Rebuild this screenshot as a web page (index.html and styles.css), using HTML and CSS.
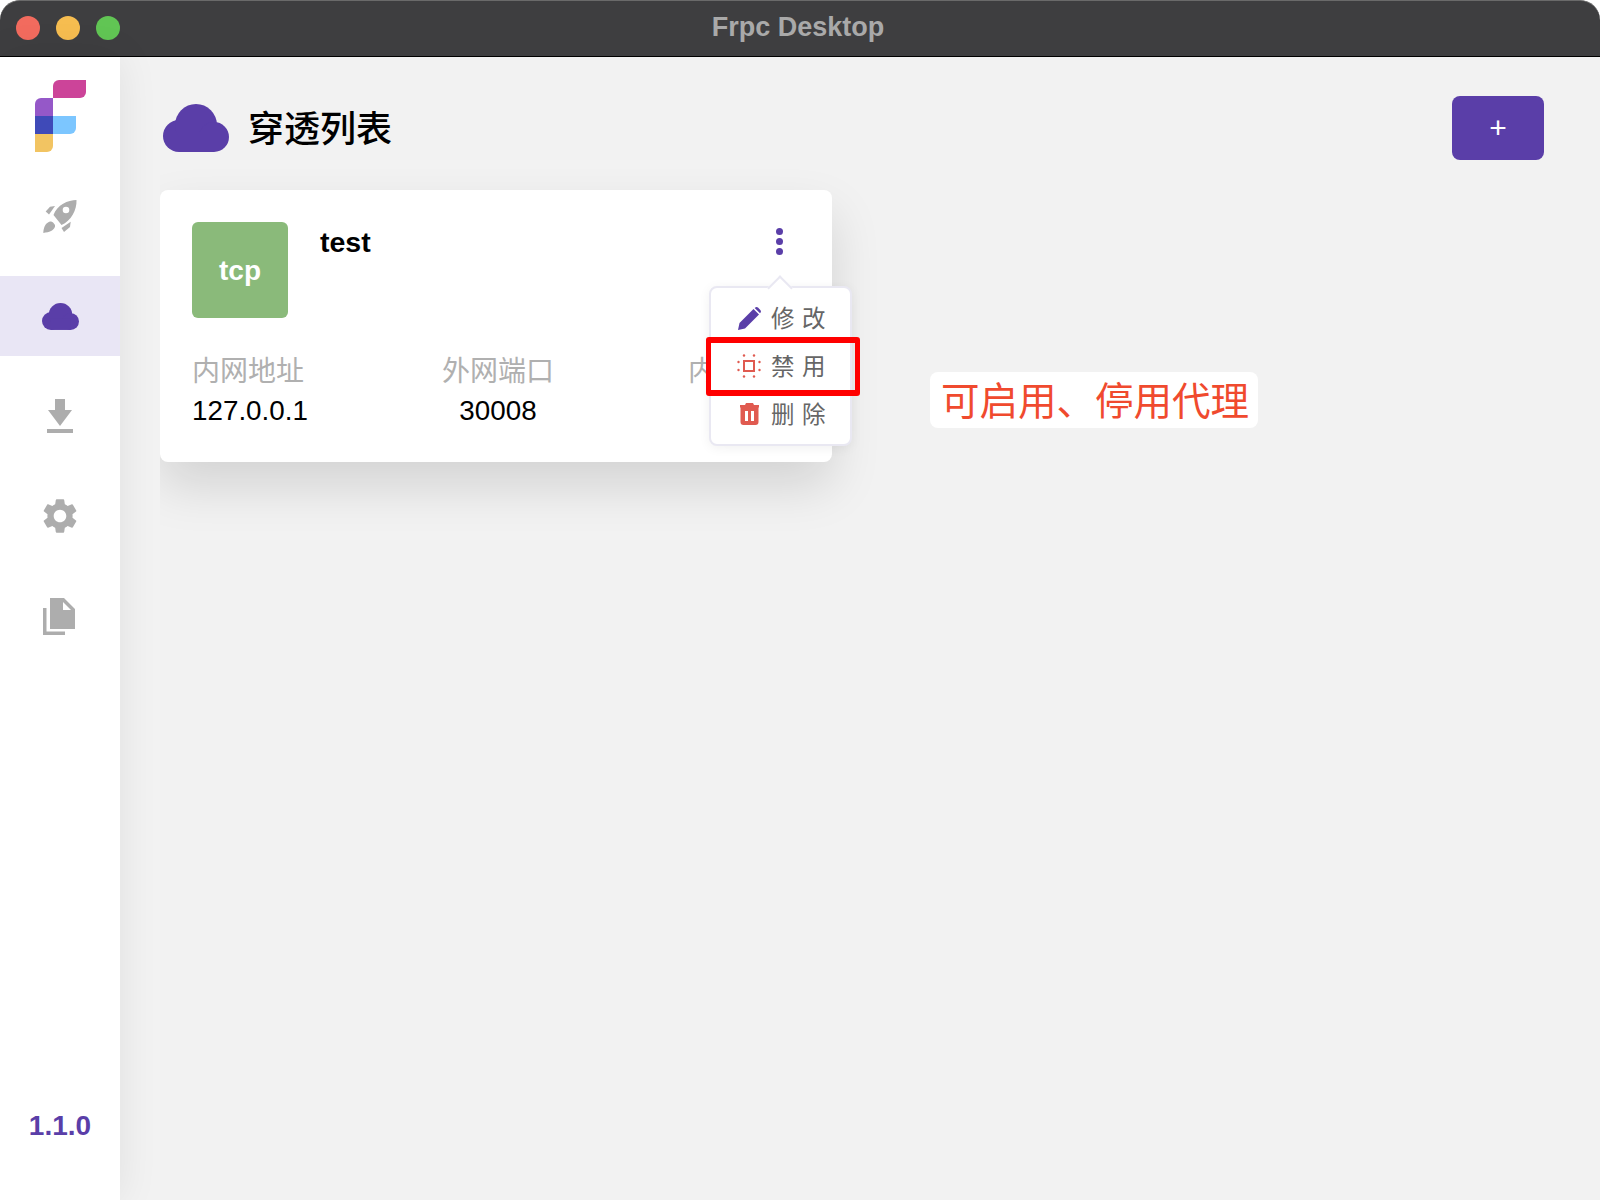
FILE: index.html
```html
<!DOCTYPE html>
<html lang="zh-CN">
<head>
  <meta charset="UTF-8">
  <title>Frpc Desktop</title>
  <link rel="stylesheet" href="styles.css">
</head>
<body>
  <svg class="defs" width="0" height="0">
    <symbol id="cloud" viewBox="0 0 66 48">
      <circle cx="16" cy="32" r="16"/>
      <circle cx="33" cy="21" r="21"/>
      <circle cx="51" cy="33" r="15"/>
      <rect x="16" y="28" width="35" height="20"/>
    </symbol>
  </svg>

  <div class="window">
    <div class="titlebar">
      <div class="lights">
        <span class="light red"></span>
        <span class="light yellow"></span>
        <span class="light green"></span>
      </div>
      <div class="title">Frpc Desktop</div>
    </div>

    <div class="app">
      <!-- Left menu -->
      <aside class="sidebar">
        <svg class="logo" width="52" height="72" viewBox="0 0 52 72">
          <path fill="#cc4499" d="M19 6a6 6 0 0 1 6-6h27v12a6 6 0 0 1-6 6H19z"/>
          <path fill="#9558c8" d="M1 24a6 6 0 0 1 6-6h12v18H1z"/>
          <rect fill="#3f4ab8" x="1" y="36" width="18" height="18"/>
          <path fill="#7cc6ff" d="M19 36h23v12a6 6 0 0 1-6 6H19z"/>
          <path fill="#f2c462" d="M1 54h18v12a6 6 0 0 1-6 6H1z"/>
        </svg>
        <nav class="nav">
          <a class="nav-item">
            <svg class="rocket" width="34" height="34" viewBox="0 0 34 34" fill="#adadad">
              <path fill-rule="evenodd" d="M33.5 0C25 0 14 5 10.5 15L18.500 25C28 21 34 10 33.500 0zM23 6.700a3.300 3.300 0 1 1 0 6.600a3.300 3.300 0 0 1 0-6.600z"/>
              <path d="M2.700 11.500L7 6.800L12 6L6 14.500z"/>
              <path d="M18.500 28L27.700 21.700L27 27L21 32z"/>
              <path d="M.3 33C.5 28 2 24 5 22.500C7 21 9 21.500 10.500 23L12 25C12.500 27 11 29 9 30.500C6.500 32 3 32.500 .3 33z"/>
            </svg>
          </a>
          <a class="nav-item active">
            <svg class="icon-purple" width="37" height="27"><use href="#cloud"/></svg>
          </a>
          <a class="nav-item">
            <svg width="26" height="34" viewBox="0 0 26 34" fill="#adadad">
              <path d="M8 0H18V11H25L13 27L1 11H8z"/>
              <rect x="0" y="30" width="26" height="4"/>
            </svg>
          </a>
          <a class="nav-item">
            <svg class="gear" width="42" height="42" viewBox="0 0 24 24" fill="#adadad">
              <path d="M19.14 12.94c.04-.3.06-.61.06-.94 0-.32-.02-.64-.07-.94l2.03-1.58a.49.49 0 0 0 .12-.61l-1.92-3.32a.488.488 0 0 0-.59-.22l-2.39.96c-.5-.38-1.03-.7-1.62-.94l-.36-2.54a.484.484 0 0 0-.48-.41h-3.84c-.24 0-.43.17-.47.41l-.36 2.54c-.59.24-1.13.57-1.62.94l-2.39-.96c-.22-.08-.47 0-.59.22L2.74 8.87c-.12.21-.08.47.12.61l2.03 1.58c-.05.3-.09.63-.09.94s.02.64.07.94l-2.03 1.58a.49.49 0 0 0-.12.61l1.92 3.32c.12.22.37.29.59.22l2.39-.96c.5.38 1.03.7 1.62.94l.36 2.54c.05.24.24.41.48.41h3.84c.24 0 .44-.17.47-.41l.36-2.54c.59-.24 1.13-.56 1.62-.94l2.39.96c.22.08.47 0 .59-.22l1.92-3.32c.12-.22.07-.47-.12-.61l-2.01-1.58zM12 15.6c-1.98 0-3.6-1.62-3.6-3.6s1.62-3.6 3.6-3.6 3.6 1.62 3.6 3.6-1.62 3.6-3.6 3.6z"/>
            </svg>
          </a>
          <a class="nav-item">
            <svg class="files" width="32" height="37" viewBox="0 0 32 37" fill="#adadad">
              <path fill-rule="evenodd" d="M7 0H21L32 11V31H7zM20 4V12H28z"/>
              <path d="M0 10H3.500V33.500H22V37H0z"/>
            </svg>
          </a>
        </nav>
        <div class="version">1.1.0</div>
      </aside>

      <main class="main">
        <div class="content">
          <header class="page-head">
            <div class="page-title">
              <svg class="icon-purple" width="66" height="48"><use href="#cloud"/></svg>
              <h1>穿透列表</h1>
            </div>
            <button class="add-btn">+</button>
          </header>

          <section class="card">
            <div class="card-top">
              <div class="type-box">tcp</div>
              <div class="proxy-name">test</div>
            </div>
            <div class="stats">
              <div class="stat">
                <div class="stat-label">内网地址</div>
                <div class="stat-value">127.0.0.1</div>
              </div>
              <div class="stat">
                <div class="stat-label">外网端口</div>
                <div class="stat-value">30008</div>
              </div>
              <div class="stat">
                <div class="stat-label">内网端口</div>
                <div class="stat-value">8080</div>
              </div>
            </div>

            <div class="more"><i></i><i></i><i></i></div>

            <div class="popover">
              <div class="menu-item">
                <span class="menu-icon">
                  <svg width="23" height="23" viewBox="0 0 23 23" fill="#5a3ea8">
                    <path d="M0 23L1.500 16L15.500 2L21 7.500L7 21.500z"/>
                    <path d="M17 .8C18 -.2 19 -.2 20 .6L22.300 3C23.200 4 23.200 5 22.200 6L22 6.300L16.700 1z"/>
                  </svg>
                </span>
                <span class="menu-text">修改</span>
              </div>
              <div class="menu-item">
                <span class="menu-icon">
                  <svg width="24" height="24" viewBox="0 0 24 24" fill="#e05a50">
                    <path fill-rule="evenodd" d="M6 6H18V18H6zM8 8V16H16V8z"/>
                    <circle cx="1.500" cy="8" r="1.200"/>
                    <circle cx="1.500" cy="16" r="1.200"/>
                    <circle cx="22.500" cy="8" r="1.200"/>
                    <circle cx="22.500" cy="16" r="1.200"/>
                    <circle cx="7" cy="1.500" r="1.200"/>
                    <circle cx="17" cy="1.500" r="1.200"/>
                    <circle cx="7" cy="22.500" r="1.200"/>
                    <circle cx="17" cy="22.500" r="1.200"/>
                  </svg>
                </span>
                <span class="menu-text">禁用</span>
              </div>
              <div class="menu-item">
                <span class="menu-icon">
                  <svg width="19" height="22" viewBox="0 0 19 22" fill="#e05a50">
                    <path d="M6 0H13L14 2H19V4.500H0V2H5z"/>
                    <path fill-rule="evenodd" d="M.5 4H18.500V19C18.500 21 17.500 22 15.500 22H3.500C1.500 22 .5 21 .5 19zM5 8V18H8V8zM11 8V18H14V8z"/>
                  </svg>
                </span>
                <span class="menu-text">删除</span>
              </div>
              <div class="highlight"></div>
            </div>
          </section>

          <div class="note">可启用、停用代理</div>
        </div>
      </main>
    </div>
  </div>
</body>
</html>
```

FILE: styles.css
```css
/* Window frame */
body {
  margin: 0;
  background: #fff;
  font-family: "Liberation Sans", "Noto Sans CJK SC", sans-serif;
}

.defs {
  position: absolute;
}

.window {
  display: flex;
  flex-direction: column;
  width: 1600px;
  height: 1200px;
  overflow: hidden;
}

.titlebar {
  display: flex;
  align-items: center;
  justify-content: center;
  position: relative;
  flex: none;
  box-sizing: border-box;
  height: 57px;
  background: #3e3e40;
  border-top: 1px solid #6a6a6a;
  border-bottom: 1px solid #000;
  border-radius: 20px 20px 0 0;
}

.lights {
  display: flex;
  gap: 16px;
  position: absolute;
  left: 16px;
  top: 15px;
}

.light {
  width: 24px;
  height: 24px;
  border-radius: 50%;
}

.light.red { background: #f26b5e; }
.light.yellow { background: #f6bd50; }
.light.green { background: #61c554; }

.title {
  margin: 0 4px 2px 0;
  color: #a9a9a9;
  font-size: 27px;
  font-weight: bold;
}

.app {
  display: flex;
  flex: 1;
  min-height: 0;
}

/* Left menu */
.sidebar {
  display: flex;
  flex-direction: column;
  align-items: center;
  position: relative;
  z-index: 1;
  flex: none;
  width: 120px;
  background: #fff;
  box-shadow: 0 0 40px rgba(0, 0, 0, 0.08);
}

.logo {
  margin-top: 23px;
}

.nav {
  display: flex;
  flex-direction: column;
  gap: 20px;
  width: 100%;
  margin-top: 24px;
}

.nav-item {
  display: flex;
  align-items: center;
  justify-content: center;
  height: 80px;
}

.nav-item.active {
  background: #e9e6f5;
}

.rocket {
  margin-top: 1px;
}

.gear {
  margin-right: 1px;
}

.files {
  margin-right: 2px;
}

.icon-purple {
  fill: #5a3ea8;
}

.version {
  margin-top: auto;
  padding-bottom: 54px;
  color: #5a3ea8;
  font-size: 28px;
  font-weight: bold;
  line-height: 40px;
}

/* Page */
.main {
  display: flex;
  flex: 1;
  min-width: 0;
  padding-left: 40px;
  background: #f2f2f2;
}

.content {
  position: relative;
  flex: 1;
  padding: 39px 56px 0 0;
  overflow: hidden;
}

.page-head {
  display: flex;
  align-items: center;
  justify-content: space-between;
  margin-bottom: 30px;
}

.page-title {
  display: flex;
  align-items: center;
  gap: 19px;
  padding-left: 3px;
}

.page-title h1 {
  margin: 0 0 4px;
  color: #000;
  font-size: 36px;
  font-weight: 500;
}

.add-btn {
  width: 92px;
  height: 64px;
  padding: 0;
  color: #fff;
  font-family: inherit;
  font-size: 30px;
  background: #5a3ea8;
  border: none;
  border-radius: 8px;
}

/* Proxy card */
.card {
  position: relative;
  box-sizing: border-box;
  width: 672px;
  height: 272px;
  padding: 32px;
  background: #fff;
  border-radius: 8px;
  box-shadow: 0 24px 50px rgba(0, 0, 0, 0.13);
}

.card-top {
  display: flex;
  gap: 32px;
}

.type-box {
  display: flex;
  align-items: center;
  justify-content: center;
  box-sizing: border-box;
  width: 96px;
  height: 96px;
  padding-top: 2px;
  color: #fff;
  font-size: 28px;
  font-weight: bold;
  background: #8aba7a;
  border-radius: 6px;
}

.proxy-name {
  color: #000;
  font-size: 28.5px;
  font-weight: bold;
  line-height: 41px;
}

.stats {
  display: flex;
  justify-content: space-between;
  margin-top: 36px;
}

.stat {
  text-align: center;
}

.stat:first-child {
  text-align: left;
}

.stat-label {
  color: #b0b0b0;
  font-size: 28px;
  line-height: 36px;
}

.stat-value {
  padding-top: 1px;
  color: #000;
  font-size: 27.8px;
  line-height: 40px;
}

.more {
  display: flex;
  flex-direction: column;
  gap: 3px;
  position: absolute;
  left: 616px;
  top: 38px;
}

.more i {
  width: 7px;
  height: 7px;
  background: #5a3ea8;
  border-radius: 50%;
}

/* Dropdown */
.popover {
  position: absolute;
  left: 549px;
  top: 96px;
  box-sizing: border-box;
  width: 143px;
  padding: 6px 0;
  background: #fff;
  border: 2px solid #e9e8f2;
  border-radius: 8px;
  box-shadow: 0 2px 12px rgba(0, 0, 0, 0.06);
}

.popover::before {
  content: "";
  position: absolute;
  left: 60px;
  top: -9px;
  width: 16px;
  height: 16px;
  background: #fff;
  border-top: 2px solid #e9e8f2;
  border-left: 2px solid #e9e8f2;
  transform: rotate(45deg);
}

.menu-item {
  display: flex;
  align-items: center;
  gap: 7px;
  position: relative;
  height: 48px;
  padding-left: 23px;
}

.menu-icon {
  display: flex;
  align-items: center;
  justify-content: center;
  width: 30px;
}

.menu-text {
  margin-top: -2px;
  color: #666;
  font-size: 23.5px;
  letter-spacing: 7.5px;
}

.highlight {
  position: absolute;
  left: -5px;
  top: 49px;
  box-sizing: border-box;
  width: 154px;
  height: 59px;
  border-style: solid;
  border-color: #f00;
  border-width: 6px 5px;
  border-radius: 3px;
}

/* Annotation */
.note {
  position: absolute;
  left: 770px;
  top: 315px;
  box-sizing: border-box;
  width: 328px;
  height: 56px;
  padding: 2px 0 0 11px;
  color: #f04a2e;
  font-size: 38.5px;
  line-height: 56px;
  white-space: nowrap;
  background: #fff;
  border-radius: 8px;
}
```
